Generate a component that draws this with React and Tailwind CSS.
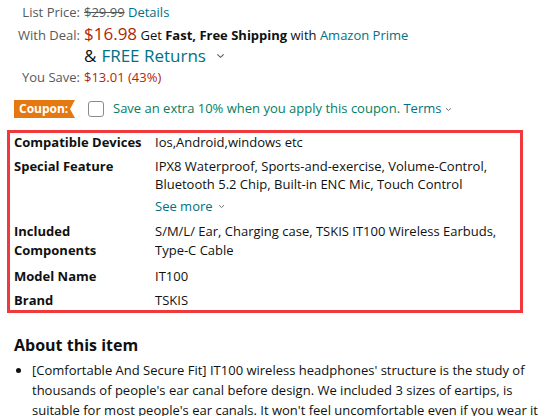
import React from 'react';

const specs = [
  { label: 'Compatible Devices', value: ['Ios,Android,windows etc'], cls: 'mt-0 leading-[18px]' },
  {
    label: 'Special Feature',
    value: ['IPX8 Waterproof, Sports-and-exercise, Volume-Control,', 'Bluetooth 5.2 Chip, Built-in ENC Mic, Touch Control'],
    more: true,
    cls: 'mt-[6px] leading-[18px]',
  },
  {
    label: ['Included', 'Components'],
    value: ['S/M/L/ Ear, Charging case, TSKIS IT100 Wireless Earbuds,', 'Type-C Cable'],
    cls: 'mt-[7px] leading-[19px]',
  },
  { label: 'Model Name', value: ['IT100'], cls: 'mt-[7px] leading-[18px]' },
  { label: 'Brand', value: ['TSKIS'], cls: 'mt-[6px] leading-[18px]' },
];

function Chevron({ className }) {
  return (
    <svg viewBox="0 0 10 6" className={className} fill="none" stroke="currentColor" strokeWidth="1.2">
      <path d="M1.5 1.2 L5 4.5 L8.5 1.2" />
    </svg>
  );
}

export default function App() {
  return (
    <div className="w-[554px] h-[416px] overflow-hidden bg-white text-[#0F1111] font-['Open_Sans',sans-serif]">
      {/* price block */}
      <div className="pt-[2px] text-[13px] leading-[21px]">
        <div className="flex">
          <div className="w-[80px] text-right text-[#565959]">List Price:</div>
          <div className="pl-[4px] text-[#565959]">
            <span className="line-through">$29.99</span> <span className="text-[#007185]">Details</span>
          </div>
        </div>
        <div className="flex items-baseline h-[22px]">
          <div className="w-[80px] text-right text-[#565959]">With Deal:</div>
          <div className="pl-[4px]">
            <span className="text-[17px] text-[#B12704]">$16.98</span> Get <span className="font-bold">Fast, Free Shipping</span> with <span className="text-[#007185]">Amazon Prime</span>
          </div>
        </div>
        <div className="flex items-center h-[21px] pl-[84px] text-[17px]">
          <span>&amp; </span><span className="ml-[5px] text-[#007185]">FREE Returns</span>
          <Chevron className="ml-[10px] w-[9px] h-[6px] text-[#565959]" />
        </div>
        <div className="flex mt-[1px]">
          <div className="w-[80px] text-right text-[#565959]">You Save:</div>
          <div className="pl-[4px] text-[#B12704]">$13.01 (43%)</div>
        </div>
      </div>

      {/* coupon */}
      <div className="flex items-center mt-[12px] pl-[14px] h-[18px]">
        <div className="relative h-[18px] w-[61px] bg-[#E47911] text-white text-[12px] font-bold leading-[18px] pl-[5px]">
          Coupon:
          <div className="absolute right-0 top-0 w-0 h-0 border-t-[9px] border-b-[9px] border-r-[5px] border-t-transparent border-b-transparent border-r-white" />
        </div>
        <div className="ml-[13px] w-[16px] h-[16px] border border-[#888C8C] rounded-[3px] bg-white" />
        <div className="ml-[9px] text-[13px] text-[#067D62]">
          Save an extra 10% when you apply this coupon. <span className="text-[#007185]">Terms</span>
        </div>
        <Chevron className="ml-[4px] w-[7px] h-[5px] text-[#565959]" />
      </div>

      {/* spec table */}
      <div className="mt-[12px] ml-[7px] w-[516px] border-[3px] border-[#F0393C] pb-[1px]">
        {specs.map((s, i) => (
          <div key={i} className={`flex text-[13px] ${s.cls}`}>
            <div className="w-[145px] pl-[4px] font-bold">
              {Array.isArray(s.label) ? s.label.map((l) => <div key={l}>{l}</div>) : s.label}
            </div>
            <div>
              {s.value.map((v) => (
                <div key={v}>{v}</div>
              ))}
              {s.more && (
                <div className="flex items-center mt-[4px] text-[#007185]">
                  See more
                  <Chevron className="ml-[5px] w-[7px] h-[5px] text-[#565959]" />
                </div>
              )}
            </div>
          </div>
        ))}
      </div>

      {/* about */}
      <div className="mt-[21px] pl-[14px]">
        <div className="text-[16px] font-bold leading-[22px]">About this item</div>
        <ul className="mt-[4px] pl-[18px] list-disc text-[13px] leading-[20px]">
          <li>
            [Comfortable And Secure Fit] IT100 wireless headphones' structure is the study of thousands of people's ear canal before design. We included 3 sizes of eartips, is suitable for most people's ear canals. It won't feel uncomfortable even if you wear it for a long time.
          </li>
        </ul>
      </div>
    </div>
  );
}
